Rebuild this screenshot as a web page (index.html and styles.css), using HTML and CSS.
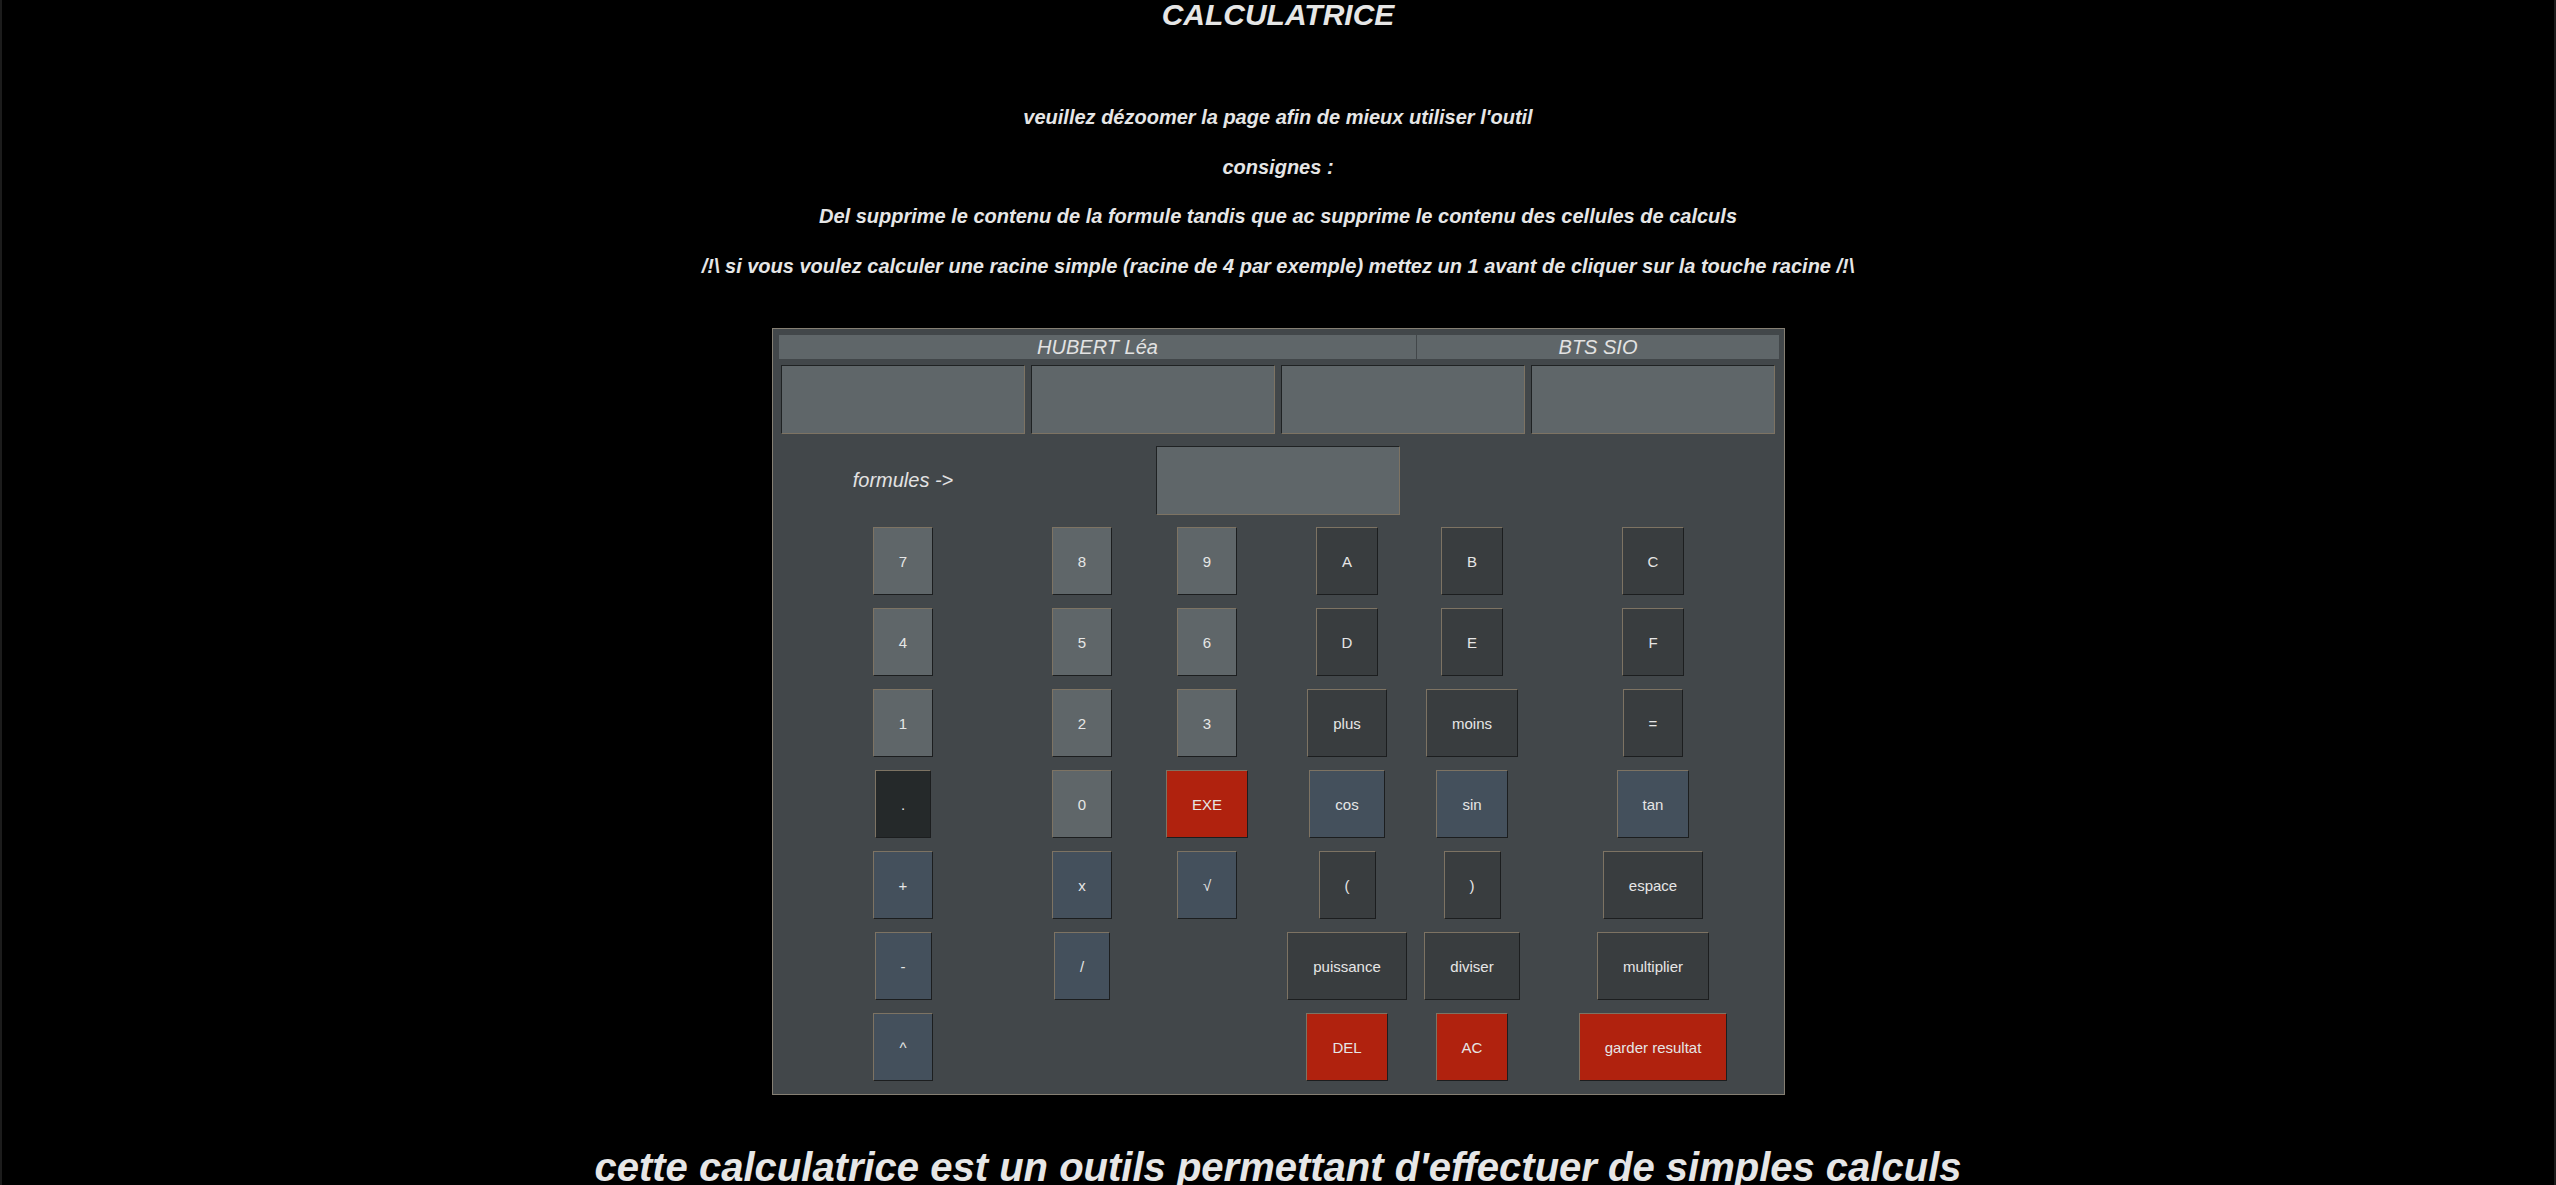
FILE: index.html
```html
<!DOCTYPE html>
<html lang="fr">
<head>
<meta charset="utf-8">
<title>Calculatrice</title>
<link rel="stylesheet" href="styles.css">
</head>
<body>
<header class="intro">
  <h1 class="title">CALCULATRICE</h1>
  <div class="notes">
    <p class="note">veuillez dézoomer la page afin de mieux utiliser l'outil</p>
    <p class="note">consignes :</p>
    <p class="note">Del supprime le contenu de la formule tandis que ac supprime le contenu des cellules de calculs</p>
    <p class="note">/!\ si vous voulez calculer une racine simple (racine de 4 par exemple) mettez un 1 avant de cliquer sur la touche racine /!\</p>
  </div>
</header>

<main class="calc">
  <div class="calc-head">
    <div class="head-cell head-name">HUBERT Léa</div>
    <div class="head-cell head-class">BTS SIO</div>
  </div>

  <div class="displays">
    <input class="screen" type="text" readonly>
    <input class="screen" type="text" readonly>
    <input class="screen" type="text" readonly>
    <input class="screen" type="text" readonly>
  </div>

  <div class="formula-row">
    <div class="formula-label">formules -&gt;</div>
    <input class="screen formula-input" type="text" readonly>
  </div>

  <div class="keypad">
    <button class="key key-num">7</button>
    <button class="key key-num">8</button>
    <button class="key key-num">9</button>
    <button class="key key-dark">A</button>
    <button class="key key-dark">B</button>
    <button class="key key-dark">C</button>

    <button class="key key-num">4</button>
    <button class="key key-num">5</button>
    <button class="key key-num">6</button>
    <button class="key key-dark">D</button>
    <button class="key key-dark">E</button>
    <button class="key key-dark">F</button>

    <button class="key key-num">1</button>
    <button class="key key-num">2</button>
    <button class="key key-num">3</button>
    <button class="key key-dark">plus</button>
    <button class="key key-dark">moins</button>
    <button class="key key-dark">=</button>

    <button class="key key-black">.</button>
    <button class="key key-num">0</button>
    <button class="key key-red">EXE</button>
    <button class="key key-blue">cos</button>
    <button class="key key-blue">sin</button>
    <button class="key key-blue">tan</button>

    <button class="key key-blue">+</button>
    <button class="key key-blue">x</button>
    <button class="key key-blue">√</button>
    <button class="key key-dark">(</button>
    <button class="key key-dark">)</button>
    <button class="key key-dark">espace</button>

    <button class="key key-blue">-</button>
    <button class="key key-blue">/</button>
    <span class="blank"></span>
    <button class="key key-dark">puissance</button>
    <button class="key key-dark">diviser</button>
    <button class="key key-dark">multiplier</button>

    <button class="key key-blue">^</button>
    <span class="blank"></span>
    <span class="blank"></span>
    <button class="key key-red">DEL</button>
    <button class="key key-red">AC</button>
    <button class="key key-red">garder resultat</button>
  </div>
</main>

<p class="outro">cette calculatrice est un outils permettant d'effectuer de simples calculs</p>
</body>
</html>
```

FILE: styles.css
```css
* {
  box-sizing: border-box;
}

html, body {
  margin: 0;
  padding: 0;
  background: #000;
}

body {
  font-family: "Liberation Sans", Arial, sans-serif;
  color: #e6e6e6;
  height: 1185px;
  overflow: hidden;
  border-left: 2px solid #1c1c1c;
  border-right: 2px solid #1c1c1c;
}

.intro {
  text-align: center;
}

.title {
  margin: 0;
  font-size: 30px;
  line-height: 30px;
  font-weight: bold;
  font-style: italic;
}

.notes {
  display: flex;
  flex-direction: column;
  gap: 26.7px;
  margin-top: 76px;
}

.note {
  margin: 0;
  font-size: 20px;
  line-height: 23px;
  font-weight: bold;
  font-style: italic;
}

.calc {
  width: 1013px;
  height: 767px;
  margin: 50px 0 0 calc(50% - 506px);
  padding: 6px 0 13px;
  background: #42474a;
  border: 1px solid #857f73;
}

.calc-head {
  display: flex;
  gap: 1px;
  margin: 0 5px 0 6px;
  height: 24px;
  background: #42474a;
}

.head-cell {
  background: #5f6669;
  font-style: italic;
  font-size: 20px;
  line-height: 24px;
  text-align: center;
  color: #e2e2e2;
}

.head-name {
  width: 637px;
}

.head-class {
  flex: 1;
}

.displays {
  display: flex;
  gap: 6px;
  margin: 6px 8px 0;
}

.screen {
  display: block;
  width: 244px;
  height: 69px;
  margin: 0;
  padding: 0;
  background: #5f6669;
  border: 1px solid;
  border-color: #1f2223 #7d7363 #7d7363 #1f2223;
  color: #e6e6e6;
  font: 16px "Liberation Sans", Arial, sans-serif;
  outline: none;
}

.formula-row {
  display: flex;
  align-items: center;
  margin: 12px 8px 0;
  height: 69px;
}

.formula-label {
  width: 244px;
  text-align: center;
  font-style: italic;
  font-size: 20px;
  color: #e2e2e2;
}

.formula-input {
  margin-left: 131px;
}

.keypad {
  display: grid;
  grid-template-columns: 244px 114px 136px 144px 106px 256px;
  grid-auto-rows: 68px;
  row-gap: 13px;
  margin: 12px 0 0 8px;
}

.key {
  justify-self: center;
  height: 68px;
  margin: 0;
  padding: 0 25px;
  border: 1px solid;
  border-color: #7d7363 #1c1e1f #1c1e1f #7d7363;
  font: 15px "Liberation Sans", Arial, sans-serif;
  color: #e6e6e6;
  white-space: nowrap;
  cursor: pointer;
}

.key-num {
  background: #5f6669;
}

.key-dark {
  background: #393d3f;
}

.key-blue {
  background: #44505c;
}

.key-black {
  background: #25292a;
}

.key-red {
  background: #b0220e;
}

.outro {
  margin: 49px 0 0;
  text-align: center;
  font-size: 40px;
  line-height: 46px;
  font-weight: bold;
  font-style: italic;
  color: #e6e6e6;
}
```
